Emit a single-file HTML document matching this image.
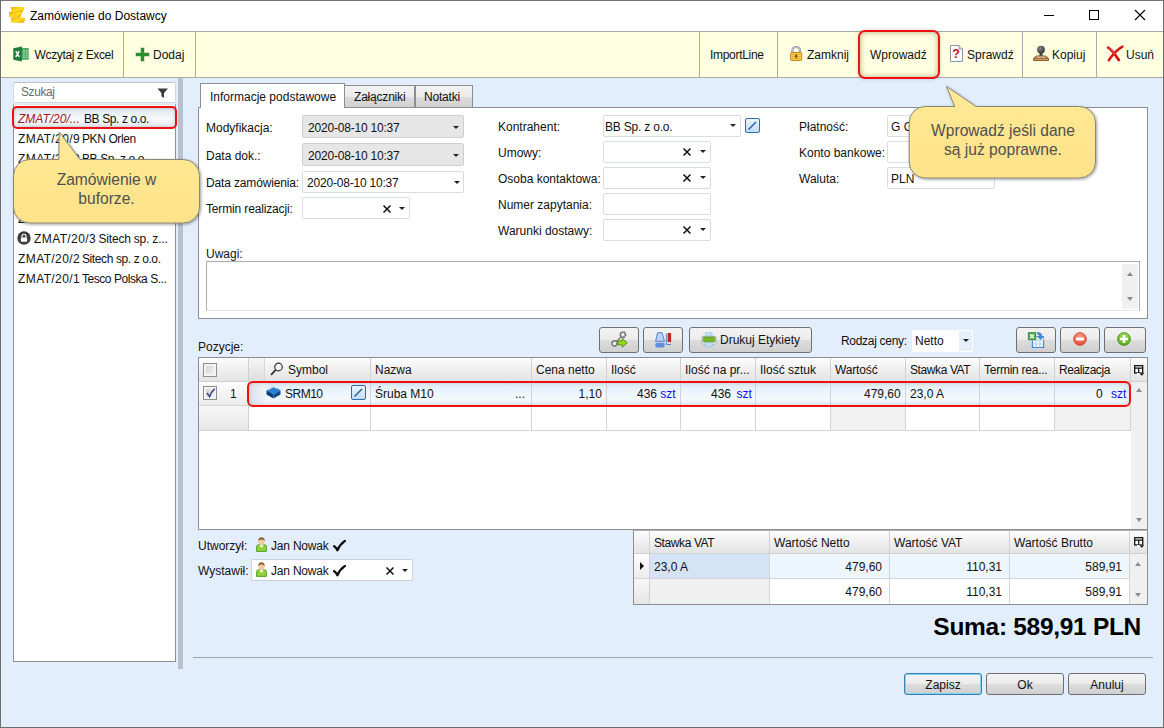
<!DOCTYPE html>
<html lang="pl">
<head>
<meta charset="utf-8">
<title>Zamówienie do Dostawcy</title>
<style>
*{box-sizing:border-box;margin:0;padding:0}
html,body{width:1164px;height:728px;overflow:hidden;background:#e3eefd}
body{position:relative;font-family:"Liberation Sans",sans-serif;font-size:12px;color:#111;letter-spacing:0}
.a{position:absolute}
.t{position:absolute;white-space:nowrap;line-height:16px;height:16px}
#win{left:0;top:0;width:1164px;height:728px;border:1px solid #6e6e6e;border-top-color:#777;pointer-events:none;z-index:50}
#title{left:1px;top:1px;width:1162px;height:30px;background:#fff}
#tb{left:1px;top:31px;width:1162px;height:47px;background:#ffffe1;border-top:1px solid #a9a9a9;border-bottom:1px solid #a9a9a9}
.sep{position:absolute;top:32px;width:1px;height:45px;background:#a9a9a9}
.inp{position:absolute;background:#fff;border:1px solid #d9dce1;border-radius:2px}
.inp.g{background:#e6e6e6;border-color:#cfcfcf}
.arr{position:absolute;width:0;height:0;border-left:3px solid transparent;border-right:3px solid transparent;border-top:3px solid #222}
.x{position:absolute;width:10px;height:10px}
.btn{position:absolute;border:1px solid #707070;border-radius:3px;background:linear-gradient(#f3f3f3,#ebebeb 50%,#dddddd 50%,#cfcfcf)}
.hd{position:absolute;background:linear-gradient(#fdfdfd,#efefef 52%,#e3e3e3);border-right:1px solid #d0d0d0;border-bottom:1px solid #d0d0d0}
.cell{position:absolute;border-right:1px solid #d4d4d4;border-bottom:1px solid #d4d4d4;background:#fff}
.blue{color:#0a0af0}
.call{position:absolute;font-family:"Liberation Sans",sans-serif;font-size:15.6px;letter-spacing:0;color:#505050;text-align:center;line-height:19px}
</style>
</head>
<body>
<div class="a" id="title"></div>
<!-- title icon: stack of gold coins -->
<svg class="a" style="left:8px;top:6px" width="18" height="18" viewBox="0 0 18 18">
 <defs><linearGradient id="gc" x1="0" y1="0" x2="1" y2="1"><stop offset="0" stop-color="#e8a90a"/><stop offset=".5" stop-color="#ffe11a"/><stop offset="1" stop-color="#e69c05"/></linearGradient></defs>
 <path d="M3.200 1h13.600l-2.200 5.200H3.200z" fill="url(#gc)"/>
 <path d="M1 6h13.400l-2.200 5.500H1z" fill="url(#gc)"/>
 <path d="M3.200 11.400h13.600v3l-1.600 2.400H3.200z" fill="url(#gc)"/>
</svg>
<div class="t" style="left:30px;top:8px;color:#000">Zamówienie do Dostawcy</div>
<!-- window controls -->
<div class="a" style="left:1044px;top:15px;width:10px;height:1px;background:#000"></div>
<div class="a" style="left:1089px;top:10px;width:10px;height:10px;border:1px solid #000"></div>
<svg class="a" style="left:1134px;top:9px" width="12" height="12" viewBox="0 0 12 12"><path d="M1 1l10 10M11 1L1 11" stroke="#000" stroke-width="1.1" fill="none"/></svg>

<div class="a" id="tb"></div>
<div class="sep" style="left:123px"></div>
<div class="sep" style="left:195px"></div>
<div class="sep" style="left:699px"></div>
<div class="sep" style="left:777px"></div>
<div class="sep" style="left:1022px"></div>
<div class="sep" style="left:1096px"></div>
<!-- excel icon -->
<svg class="a" style="left:13px;top:46px" width="16" height="16" viewBox="0 0 16 16">
 <rect x="8" y="2.100" width="7.700" height="11.600" fill="#41a557"/>
 <path d="M9.700 4h2.200v1.400H9.700zM12.600 4h2.200v1.400h-2.200zM9.700 6.200h2.200v1.400H9.700zM12.600 6.200h2.200v1.400h-2.200zM9.700 8.400h2.200v1.400H9.700zM12.600 8.400h2.200v1.400h-2.200zM9.700 10.600h2.200V12H9.700zM12.600 10.600h2.200V12h-2.200z" fill="#9fd6a9"/>
 <path d="M0.300 2.200L8.900 0.500v15L0.300 13.800z" fill="#1f7c3d"/>
 <path d="M2.800 5.200l3.400 5.600M6.200 5.200l-3.400 5.600" stroke="#fff" stroke-width="1.500"/>
</svg>
<div class="t" style="left:34.500px;top:47px;letter-spacing:-0.35px">Wczytaj z Excel</div>
<!-- plus icon -->
<svg class="a" style="left:134.700px;top:46.800px" width="15" height="15" viewBox="0 0 15 15"><path d="M5.500 0.500h4v5h5v4h-5v5h-4v-5h-5v-4h5z" fill="#2e8b2e" stroke="#f4f8e4" stroke-width=".6"/></svg>
<div class="t" style="left:153px;top:47px">Dodaj</div>
<div class="t" style="left:710px;top:47px;letter-spacing:-0.3px">ImportLine</div>
<!-- lock icon -->
<svg class="a" style="left:789px;top:45px" width="14" height="17" viewBox="0 0 14 17">
 <path d="M3.400 8V5.200a3.800 3.200 0 0 1 7.600 0V8" fill="none" stroke="#8e94a6" stroke-width="2.200"/>
 <path d="M3.400 8V5.200a3.800 3.200 0 0 1 7.600 0V8" fill="none" stroke="#c9cedb" stroke-width=".8"/>
 <rect x="1.700" y="7.500" width="11" height="8" rx=".8" fill="#f7cd4e" stroke="#c8821a" stroke-width="1"/>
 <path d="M3 9.500h8.400M3 11.500h8.400M3 13.500h8.400" stroke="#e0a22c" stroke-width=".8"/>
 <rect x="6.400" y="9.600" width="1.600" height="3.200" fill="#5a3c0c"/>
</svg>
<div class="t" style="left:807px;top:47px">Zamknij</div>
<!-- red highlight around Wprowadź -->
<div class="a" style="left:858px;top:30px;width:82px;height:49px;border:2px solid #f01010;border-radius:7px;background:#ffffe1;box-shadow:inset 0 0 5px 1px rgba(130,130,80,.5),0 0 4px rgba(90,90,90,.25)"></div>
<div class="t" style="left:870px;top:47px">Wprowadź</div>
<!-- question doc icon -->
<svg class="a" style="left:950px;top:45px" width="13" height="17" viewBox="0 0 13 17">
 <path d="M0.5 0.5h8.5l3.5 3.5v12.5H0.5z" fill="#fff" stroke="#8a94a8"/>
 <path d="M9 0.5v3.5h3.5" fill="#e6e9f0" stroke="#8a94a8"/>
 <text x="6" y="13" font-family="Liberation Sans,sans-serif" font-weight="bold" font-size="12.500" fill="#c80c0c" text-anchor="middle">?</text>
</svg>
<div class="t" style="left:967px;top:47px">Sprawdź</div>
<!-- stamp icon -->
<svg class="a" style="left:1033px;top:45px" width="17" height="17" viewBox="0 0 17 17">
 <defs><radialGradient id="sb" cx=".4" cy=".35" r=".7"><stop offset="0" stop-color="#8a8a8a"/><stop offset="1" stop-color="#2e2e2e"/></radialGradient></defs>
 <path d="M6.700 7.500h2.600l.5 4H6.200z" fill="#444"/>
 <circle cx="8" cy="4.600" r="3.900" fill="url(#sb)"/>
 <path d="M3.200 11h9.600l2.700 2.300v2.200H0.500v-2.200z" fill="#c99c6e" stroke="#86572a" stroke-width=".9" stroke-linejoin="round"/>
 <path d="M1 13.300h14" stroke="#86572a" stroke-width=".8"/>
 <path d="M3.600 12.100h8.800" stroke="#e6c9a6" stroke-width=".8"/>
</svg>
<div class="t" style="left:1052px;top:47px">Kopiuj</div>
<!-- red X -->
<svg class="a" style="left:1106px;top:45px" width="18" height="17" viewBox="0 0 18 17">
 <path d="M2.200 2.600C5.500 4.500 9.500 10 12.800 15" stroke="#d21212" stroke-width="2.800" fill="none" stroke-linecap="round"/>
 <path d="M16.400 1.600C11.500 4.500 6 10.500 2.800 15.200" stroke="#d61616" stroke-width="2.400" fill="none" stroke-linecap="round"/>
 <path d="M2.600 2.400C5 4 7.500 7 9 9.500" stroke="#ee7070" stroke-width=".9" fill="none"/>
</svg>
<div class="t" style="left:1126px;top:47px">Usuń</div>

<!-- LEFT PANEL -->
<div class="inp" style="left:13px;top:82px;width:163px;height:21px;border-color:#d3d7dd;border-top-color:#bfc3c9"></div>
<div class="t" style="left:21px;top:84px;color:#6a6a6a;letter-spacing:-0.4px">Szukaj</div>
<svg class="a" style="left:157.300px;top:87.600px" width="11.400" height="10.500" viewBox="0 0 13 12"><path d="M0.5 0.5h12L8 5.8V11.5L5 9.5V5.8z" fill="#3a3a3a"/></svg>
<div class="a" style="left:13px;top:104px;width:163px;height:558px;background:#fff;border:1px solid #8f8f8f;border-top-color:#e2e5e9"></div>
<div class="a" style="left:12px;top:106px;width:165px;height:23px;border:2px solid #ee1111;border-radius:5px;background:linear-gradient(#dde6ec,#f6f9fb 55%,#e4ebf0);box-shadow:inset 0 0 3px rgba(100,120,140,.45)"></div>
<div class="t" style="left:18px;top:111px;color:#a0202a;font-style:italic;letter-spacing:0px">ZMAT/20/...</div>
<div class="t" style="left:84px;top:111px;letter-spacing:-0.4px">BB Sp. z o.o.</div>
<div class="t" style="left:18px;top:131px;letter-spacing:0.4px">ZMAT/20/9</div><div class="t" style="left:82px;top:131px;letter-spacing:-0.4px">PKN Orlen</div>
<div class="t" style="left:18px;top:151px;letter-spacing:0.4px">ZMAT/20/8</div><div class="t" style="left:82px;top:151px;letter-spacing:-0.4px">BB Sp. z o.o.</div>
<div class="t" style="left:18px;top:171px;letter-spacing:0.4px">ZMAT/20/7</div><div class="t" style="left:82px;top:171px;letter-spacing:-0.4px">PKN Orlen</div>
<div class="t" style="left:18px;top:191px;letter-spacing:0.4px">ZMAT/20/6</div><div class="t" style="left:82px;top:191px;letter-spacing:-0.4px">BB Sp. z o.o.</div>
<div class="t" style="left:18px;top:211px;letter-spacing:0.4px">ZMAT/20/5</div><div class="t" style="left:82px;top:211px;letter-spacing:-0.4px">PKN Orlen</div>
<svg class="a" style="left:17px;top:231px" width="14" height="14" viewBox="0 0 13 13"><circle cx="6.5" cy="6.5" r="6.2" fill="#3c3c3c"/><rect x="3.6" y="6" width="5.8" height="4" rx=".6" fill="#fff"/><path d="M4.7 6V4.8a1.8 1.8 0 0 1 3.6 0V6" stroke="#fff" stroke-width="1.1" fill="none"/></svg>
<div class="t" style="left:34px;top:231px;letter-spacing:0.4px">ZMAT/20/3</div><div class="t" style="left:98.5px;top:231px;letter-spacing:-0.2px">Sitech sp. z...</div>
<div class="t" style="left:18px;top:251px;letter-spacing:0.4px">ZMAT/20/2</div><div class="t" style="left:82px;top:251px;letter-spacing:-0.4px">Sitech sp. z o.o.</div>
<div class="t" style="left:18px;top:271px;letter-spacing:0.4px">ZMAT/20/1</div><div class="t" style="left:82px;top:271px;letter-spacing:-0.45px">Tesco Polska S...</div>
<!-- splitter -->
<div class="a" style="left:178px;top:78px;width:5px;height:591px;background:#b9c1cd"></div>

<!-- TABS -->
<div class="a" style="left:198px;top:107px;width:950px;height:212px;background:#fff;border:1px solid #8c8e94"></div>
<div class="a" style="left:344px;top:85px;width:71px;height:23px;border:1px solid #8c8e94;background:linear-gradient(#f3f3f3,#ebebeb 50%,#dddddd 50%,#d0d0d0)"></div>
<div class="a" style="left:415px;top:85px;width:58px;height:23px;border:1px solid #8c8e94;background:linear-gradient(#f3f3f3,#ebebeb 50%,#dddddd 50%,#d0d0d0)"></div>
<div class="a" style="left:200px;top:83px;width:145px;height:25px;border:1px solid #8c8e94;border-bottom:none;background:#fff"></div>
<div class="t" style="left:210px;top:89px">Informacje podstawowe</div>
<div class="t" style="left:354px;top:89px;letter-spacing:-0.2px">Załączniki</div>
<div class="t" style="left:424px;top:89px;letter-spacing:-0.2px">Notatki</div>

<!-- column 1 -->
<div class="t" style="left:206px;top:120px">Modyfikacja:</div>
<div class="inp g" style="left:302px;top:115px;width:162px;height:23px"></div>
<div class="t" style="left:308px;top:120px;letter-spacing:-0.2px">2020-08-10 10:37</div><div class="arr" style="left:453px;top:126px"></div>
<div class="t" style="left:206px;top:148px">Data dok.:</div>
<div class="inp g" style="left:302px;top:143px;width:162px;height:23px"></div>
<div class="t" style="left:308px;top:148px;letter-spacing:-0.2px">2020-08-10 10:37</div><div class="arr" style="left:453px;top:154px"></div>
<div class="t" style="left:206px;top:175px;letter-spacing:-0.15px">Data zamówienia:</div>
<div class="inp" style="left:302px;top:171px;width:162px;height:22px"></div>
<div class="t" style="left:307px;top:175px;letter-spacing:-0.2px">2020-08-10 10:37</div><div class="arr" style="left:454px;top:181px"></div>
<div class="t" style="left:206px;top:201px;letter-spacing:-0.15px">Termin realizacji:</div>
<div class="inp" style="left:302px;top:197px;width:108px;height:22px"></div><svg class="x" style="left:382px;top:204px" viewBox="0 0 10 10"><path d="M1.5 1.5l7 7M8.5 1.5l-7 7" stroke="#111" stroke-width="1.500" fill="none"/></svg><div class="arr" style="left:399px;top:207px"></div>

<!-- column 2 -->
<div class="t" style="left:498px;top:119px">Kontrahent:</div>
<div class="inp" style="left:603px;top:115px;width:138px;height:22px"></div>
<div class="t" style="left:605px;top:119px;letter-spacing:-0.2px">BB Sp. z o.o.</div><div class="arr" style="left:730px;top:124px"></div>
<div class="a" style="left:745px;top:118px;width:15px;height:15px;border:1px solid #2a6fb5;border-radius:2px;background:linear-gradient(#eaf4ff,#c4ddf7)"></div>
<svg class="a" style="left:747px;top:120px" width="11" height="11" viewBox="0 0 11 11"><path d="M1.500 9.500L9 2" stroke="#1f5fa8" stroke-width="1.500" fill="none"/></svg>
<div class="t" style="left:498px;top:145px">Umowy:</div>
<div class="inp" style="left:603px;top:141px;width:108px;height:22px"></div><svg class="x" style="left:682px;top:147px" viewBox="0 0 10 10"><path d="M1.5 1.5l7 7M8.5 1.5l-7 7" stroke="#111" stroke-width="1.500" fill="none"/></svg><div class="arr" style="left:700px;top:150px"></div>
<div class="t" style="left:498px;top:171px">Osoba kontaktowa:</div>
<div class="inp" style="left:603px;top:167px;width:108px;height:22px"></div><svg class="x" style="left:682px;top:173px" viewBox="0 0 10 10"><path d="M1.5 1.5l7 7M8.5 1.5l-7 7" stroke="#111" stroke-width="1.500" fill="none"/></svg><div class="arr" style="left:700px;top:176px"></div>
<div class="t" style="left:498px;top:197px">Numer zapytania:</div>
<div class="inp" style="left:603px;top:193px;width:108px;height:22px"></div>
<div class="t" style="left:498px;top:223px">Warunki dostawy:</div>
<div class="inp" style="left:603px;top:219px;width:108px;height:22px"></div><svg class="x" style="left:682px;top:225px" viewBox="0 0 10 10"><path d="M1.5 1.5l7 7M8.5 1.5l-7 7" stroke="#111" stroke-width="1.500" fill="none"/></svg><div class="arr" style="left:700px;top:228px"></div>

<!-- column 3 -->
<div class="t" style="left:799px;top:119px">Płatność:</div>
<div class="inp" style="left:887px;top:115px;width:108px;height:22px"></div>
<div class="t" style="left:891px;top:119px">G G</div>
<div class="t" style="left:799px;top:145px">Konto bankowe:</div>
<div class="inp" style="left:887px;top:141px;width:108px;height:22px"></div>
<div class="t" style="left:799px;top:171px">Waluta:</div>
<div class="inp" style="left:887px;top:167px;width:108px;height:22px"></div>
<div class="t" style="left:891px;top:171px">PLN</div>

<div class="t" style="left:206px;top:246px">Uwagi:</div>
<div class="a" style="left:206px;top:261px;width:934px;height:50px;background:#fff;border:1px solid #abadb3;border-bottom-color:#e3e5e8"></div>
<div class="a" style="left:1122px;top:264px;width:16px;height:45px;background:#f0f0f0"></div>
<div class="arr" style="left:1126.5px;top:272px;border-left-width:3.500px;border-right-width:3.500px;border-top:none;border-bottom:4px solid #8a8a8a"></div>
<div class="arr" style="left:1126.5px;top:297px;border-left-width:3.500px;border-right-width:3.500px;border-top:4px solid #8a8a8a"></div>

<!-- POZYCJE -->
<div class="t" style="left:198px;top:339px">Pozycje:</div>
<div class="btn" style="left:599px;top:327px;width:40px;height:26px"></div>
<div class="btn" style="left:643px;top:327px;width:40px;height:26px"></div>
<div class="btn" style="left:689px;top:327px;width:123px;height:26px"></div>
<div class="t" style="left:720px;top:332px">Drukuj Etykiety</div>
<div class="t" style="left:841px;top:333px;letter-spacing:-0.3px">Rodzaj ceny:</div>
<div class="a" style="left:912px;top:330px;width:61px;height:22px;background:#fff"></div>
<div class="a" style="left:959px;top:331px;width:13px;height:20px;background:#e6effb"></div>
<div class="t" style="left:915px;top:333px">Netto</div><div class="arr" style="left:963px;top:339px"></div>
<div class="btn" style="left:1016px;top:327px;width:40px;height:26px"></div>
<div class="btn" style="left:1060px;top:327px;width:40px;height:26px"></div>
<div class="btn" style="left:1104px;top:327px;width:42px;height:26px"></div>
<!-- button icons -->
<svg class="a" style="left:610px;top:330px" width="20" height="20" viewBox="0 0 20 20">
 <path d="M5 13.500L12.500 5" stroke="#7a7a7a" stroke-width="1.200"/>
 <circle cx="12.900" cy="4.700" r="2.600" fill="#eee" stroke="#666" stroke-width="1.700" stroke-dasharray="1.700 .4"/>
 <circle cx="4.600" cy="13.400" r="2.600" fill="#eee" stroke="#666" stroke-width="1.700" stroke-dasharray="1.700 .4"/>
 <path d="M7.800 10.800h4.400V8.300l5 4.500-5 4.500v-2.500H7.800z" fill="#96d820" stroke="#4c8f12" stroke-width=".9" stroke-linejoin="round"/>
</svg>
<svg class="a" style="left:654px;top:331px" width="19" height="18" viewBox="0 0 19 18">
 <path d="M3.600 1.700h4.400l2.500 8.600H1.600z" fill="#bcd3f3" stroke="#4f82d2" stroke-width="1"/>
 <rect x="1.400" y="11.700" width="9.200" height="4.800" rx="1.600" fill="#5e8fdc"/>
 <path d="M12.300 2.500v11h4.800" fill="none" stroke="#5a86cc" stroke-width="1"/>
 <rect x="13.600" y="2" width="3.500" height="9" fill="#c1271c"/>
</svg>
<svg class="a" style="left:701px;top:332px" width="16" height="16" viewBox="0 0 16 16">
 <rect x="4.600" y="0.800" width="6.400" height="4.500" fill="#bfe3f6" stroke="#8cc4e4" stroke-width=".7"/>
 <rect x="0.800" y="4.300" width="14.400" height="8" rx="1.500" fill="#e4e6e8" stroke="#a5a9ad" stroke-width=".8"/>
 <rect x="2.200" y="5" width="11.600" height="5" rx=".8" fill="#79b52b" stroke="#5c9a18" stroke-width=".7"/>
 <rect x="4.600" y="10.800" width="6.400" height="4" fill="#bfe3f6" stroke="#8cc4e4" stroke-width=".7"/>
</svg>
<svg class="a" style="left:1027px;top:331px" width="18" height="18" viewBox="0 0 18 18">
 <rect x="5.400" y="6" width="11.200" height="10.400" fill="#fff" stroke="#2f80d2" stroke-width="1.100"/>
 <path d="M5.400 9.600h11.200M5.400 13h11.200M9.200 9.600v6.800M12.900 9.600v6.800" stroke="#a9cdf0" stroke-width="1"/>
 <rect x="5.400" y="6" width="11.200" height="3.200" fill="#d8eafb" opacity=".9"/>
 <path d="M10.500 1.500c3.200 0 4.300 1.600 4.300 4h1.700l-2.900 3-2.900-3h1.700c0-1.500-.4-2.200-1.900-2.200z" fill="#3b8be0" stroke="#1f64b8" stroke-width=".5"/>
 <rect x="1.200" y="1.600" width="7.600" height="7.200" fill="#49a64c" stroke="#2f8a3a" stroke-width=".7"/>
 <path d="M3 3.200l4 4M7 3.200l-4 4" stroke="#fff" stroke-width="1.300"/>
</svg>
<svg class="a" style="left:1073px;top:331.700px" width="14" height="14" viewBox="0 0 16 16"><defs><radialGradient id="rg" cx=".5" cy=".25" r=".8"><stop offset="0" stop-color="#ff9c86"/><stop offset="1" stop-color="#e2402c"/></radialGradient></defs><circle cx="8" cy="8" r="7.300" fill="url(#rg)" stroke="#cf3a26" stroke-width=".8"/><rect x="3.300" y="6.400" width="9.400" height="3.200" rx="1" fill="#fff"/></svg>
<svg class="a" style="left:1117px;top:331.700px" width="14" height="14" viewBox="0 0 16 16"><defs><radialGradient id="gg" cx=".5" cy=".25" r=".8"><stop offset="0" stop-color="#a6e060"/><stop offset="1" stop-color="#4da512"/></radialGradient></defs><circle cx="8" cy="8" r="7.300" fill="url(#gg)" stroke="#3f8f10" stroke-width=".9"/><path d="M6.500 3.300h3v3.200h3.200v3H9.500v3.200h-3V9.500H3.300v-3h3.200z" fill="#fff"/></svg>

<!-- grid -->
<div class="a" style="left:198px;top:357px;width:950px;height:173px;background:#fff;border:1px solid #8c8e94"></div>
<div class="hd" style="left:199px;top:358px;width:50px;height:24px"></div>
<div class="a" style="left:199px;top:382px;width:50px;height:24px;background:linear-gradient(#fdfdfd,#ececec);border-right:1px solid #d0d0d0;border-bottom:1px solid #d4d4d4"></div>
<div class="a" style="left:199px;top:406px;width:50px;height:25px;background:linear-gradient(#f7f7f7,#e6e6e6);border-right:1px solid #d0d0d0;border-bottom:1px solid #d4d4d4"></div>
<div class="a" style="left:203px;top:363px;width:14px;height:14px;border:1px solid #8e8f8f;background:linear-gradient(135deg,#cfcfcf,#f6f6f6);box-shadow:inset 0 0 0 2px #f4f4f4"></div>
<div class="a" style="left:203px;top:386px;width:14px;height:14px;border:1px solid #8e8f8f;background:linear-gradient(135deg,#cfcfcf,#f6f6f6);box-shadow:inset 0 0 0 2px #f4f4f4"></div>
<svg class="a" style="left:205.500px;top:388px" width="10" height="10" viewBox="0 0 10 10"><path d="M1 5l2.600 3.600C4.500 5.500 6 3 8.800 0.800" stroke="#3a468c" stroke-width="1.600" fill="none"/></svg>
<div class="t" style="left:230px;top:386px">1</div>
<div class="hd" style="left:249px;top:358px;width:122px;height:24px"></div>
<div class="t" style="left:288px;top:362px">Symbol</div>
<div class="cell" style="left:249px;top:382px;width:122px;height:24px;background:linear-gradient(#dfecf9,#f4f9fe 70%,#eaf3fc)"></div>
<div class="cell" style="left:249px;top:406px;width:122px;height:25px;background:#fff"></div>
<div class="hd" style="left:371px;top:358px;width:161px;height:24px"></div>
<div class="t" style="left:375px;top:362px">Nazwa</div>
<div class="cell" style="left:371px;top:382px;width:161px;height:24px;background:linear-gradient(#dfecf9,#f4f9fe 70%,#eaf3fc)"></div>
<div class="cell" style="left:371px;top:406px;width:161px;height:25px;background:#fff"></div>
<div class="hd" style="left:532px;top:358px;width:75px;height:24px"></div>
<div class="t" style="left:536px;top:362px">Cena netto</div>
<div class="cell" style="left:532px;top:382px;width:75px;height:24px;background:linear-gradient(#dfecf9,#f4f9fe 70%,#eaf3fc)"></div>
<div class="cell" style="left:532px;top:406px;width:75px;height:25px;background:#fff"></div>
<div class="hd" style="left:607px;top:358px;width:74px;height:24px"></div>
<div class="t" style="left:611px;top:362px">Ilość</div>
<div class="cell" style="left:607px;top:382px;width:74px;height:24px;background:linear-gradient(#dfecf9,#f4f9fe 70%,#eaf3fc)"></div>
<div class="cell" style="left:607px;top:406px;width:74px;height:25px;background:#fff"></div>
<div class="hd" style="left:681px;top:358px;width:75px;height:24px"></div>
<div class="t" style="left:685px;top:362px">Ilość na pr...</div>
<div class="cell" style="left:681px;top:382px;width:75px;height:24px;background:linear-gradient(#dfecf9,#f4f9fe 70%,#eaf3fc)"></div>
<div class="cell" style="left:681px;top:406px;width:75px;height:25px;background:#fff"></div>
<div class="hd" style="left:756px;top:358px;width:75px;height:24px"></div>
<div class="t" style="left:760px;top:362px">Ilość sztuk</div>
<div class="cell" style="left:756px;top:382px;width:75px;height:24px;background:linear-gradient(#dfecf9,#f4f9fe 70%,#eaf3fc)"></div>
<div class="cell" style="left:756px;top:406px;width:75px;height:25px;background:#fff"></div>
<div class="hd" style="left:831px;top:358px;width:75px;height:24px"></div>
<div class="t" style="left:835px;top:362px;letter-spacing:-0.15px">Wartość</div>
<div class="cell" style="left:831px;top:382px;width:75px;height:24px;background:linear-gradient(#dfecf9,#f4f9fe 70%,#eaf3fc)"></div>
<div class="cell" style="left:831px;top:406px;width:75px;height:25px;background:#f1f1f1"></div>
<div class="hd" style="left:906px;top:358px;width:74px;height:24px"></div>
<div class="t" style="left:910px;top:362px;letter-spacing:-0.4px">Stawka VAT</div>
<div class="cell" style="left:906px;top:382px;width:74px;height:24px;background:linear-gradient(#dfecf9,#f4f9fe 70%,#eaf3fc)"></div>
<div class="cell" style="left:906px;top:406px;width:74px;height:25px;background:#fff"></div>
<div class="hd" style="left:980px;top:358px;width:75px;height:24px"></div>
<div class="t" style="left:984px;top:362px;letter-spacing:-0.25px">Termin rea...</div>
<div class="cell" style="left:980px;top:382px;width:75px;height:24px;background:linear-gradient(#dfecf9,#f4f9fe 70%,#eaf3fc)"></div>
<div class="cell" style="left:980px;top:406px;width:75px;height:25px;background:#fff"></div>
<div class="hd" style="left:1055px;top:358px;width:76px;height:24px"></div>
<div class="t" style="left:1059px;top:362px;letter-spacing:-0.45px">Realizacja</div>
<div class="cell" style="left:1055px;top:382px;width:76px;height:24px;background:linear-gradient(#dfecf9,#f4f9fe 70%,#eaf3fc)"></div>
<div class="cell" style="left:1055px;top:406px;width:76px;height:25px;background:#f1f1f1"></div>

<div class="hd" style="left:1131px;top:358px;width:16px;height:24px;border-right:none"></div>
<div class="a" style="left:1131px;top:382px;width:16px;height:147px;background:#f0f0f0"></div>
<div class="arr" style="left:1135.5px;top:388px;border-left-width:3.500px;border-right-width:3.500px;border-top:none;border-bottom:4px solid #8a8a8a"></div>
<div class="arr" style="left:1135.5px;top:518px;border-left-width:3.500px;border-right-width:3.500px;border-top:4px solid #8a8a8a"></div>
<svg class="a" style="left:1134px;top:365px" width="10" height="11" viewBox="0 0 10 11"><rect x="0.700" y="0.700" width="8" height="7.300" fill="#fff" stroke="#111" stroke-width="1.300"/><path d="M0.700 3.200h8M4.700 3.200v4.800" stroke="#111" stroke-width="1.200"/><rect x="3" y="8" width="7" height="1.500" fill="#fff"/><path d="M5.200 8.200h5.200l-2.600 2.600z" fill="#111"/></svg>
<svg class="a" style="left:270px;top:362px" width="14" height="14" viewBox="0 0 14 14"><circle cx="8.500" cy="5" r="3.800" fill="none" stroke="#333" stroke-width="1.200"/><path d="M5.800 7.800L1 12.800" stroke="#333" stroke-width="1.800"/></svg>
<div class="a" style="left:249px;top:358px;width:16px;height:23px;background:linear-gradient(#f6f6f6,#e9e9e9 55%,#dedede);border-right:1px solid #d8d8d8"></div>
<div class="a" style="left:249px;top:383px;width:16px;height:22px;background:linear-gradient(90deg,#d9e0e7,#eef3f8)"></div>
<!-- row content -->
<svg class="a" style="left:266px;top:386px" width="15" height="13" viewBox="0 0 15 13"><path d="M7.500 0.400L14.500 4.200 7.500 8.300 0.500 4.200z" fill="#2b7fd2"/><path d="M0.500 4.200L7.500 8.300v4.300L0.500 8.600z" fill="#0d3d7a"/><path d="M14.500 4.200L7.500 8.300v4.300l7-4z" fill="#114a8e"/><path d="M1.500 4.100L7.500 0.900l3 1.600" stroke="#d8ecff" stroke-width=".9" fill="none"/></svg>
<div class="t" style="left:285px;top:386px;letter-spacing:-0.5px">SRM10</div>
<div class="a" style="left:351px;top:385px;width:15px;height:15px;border:1px solid #2a6fb5;border-radius:2px;background:linear-gradient(#eaf4ff,#c4ddf7)"></div>
<svg class="a" style="left:353px;top:387px" width="11" height="11" viewBox="0 0 11 11"><path d="M1.500 9.500L9 2" stroke="#1f5fa8" stroke-width="1.500" fill="none"/></svg>
<div class="t" style="left:375px;top:386px">Śruba M10</div>
<div class="t" style="left:515px;top:386px">...</div>
<div class="t" style="left:578.500px;top:386px">1,10</div>
<div class="t" style="left:637px;top:386px">436 <span class="blue">szt</span></div>
<div class="t" style="left:711px;top:386px">436<span class="blue" style="margin-left:5.500px">szt</span></div>
<div class="t" style="left:864px;top:386px">479,60</div>
<div class="t" style="left:910px;top:386px">23,0 A</div>
<div class="t" style="left:1096px;top:386px">0<span class="blue" style="margin-left:8.300px">szt</span></div>
<!-- red highlight on row -->
<div class="a" style="left:247px;top:381px;width:884px;height:26px;border:2px solid #f01010;border-radius:6px;box-shadow:inset 0 0 4px rgba(110,120,130,.28)"></div>

<!-- BOTTOM -->
<div class="t" style="left:198px;top:538px">Utworzył:</div>
<div class="t" style="left:271px;top:538px;letter-spacing:-0.2px">Jan Nowak</div>
<div class="t" style="left:198px;top:563px">Wystawił:</div>
<div class="inp" style="left:251px;top:559px;width:162px;height:22px;border-color:#cdd1d7"></div>
<div class="t" style="left:271px;top:563px;letter-spacing:-0.2px">Jan Nowak</div><svg class="x" style="left:385px;top:566px" viewBox="0 0 10 10"><path d="M1.5 1.5l7 7M8.5 1.5l-7 7" stroke="#111" stroke-width="1.500" fill="none"/></svg><div class="arr" style="left:402px;top:569px"></div>
<svg class="a" style="left:255.500px;top:536.5px" width="11" height="15" viewBox="0 0 11 15"><path d="M0.600 14.400V9.600c0-1.200 1-1.800 2.200-1.800h5.400c1.200 0 2.200.6 2.200 1.800v4.800z" fill="#8fd33c" stroke="#4a9a1c" stroke-width=".9"/><path d="M3.300 8.200l2.200 2.600 2.200-2.600z" fill="#fff"/><ellipse cx="5.500" cy="4.600" rx="3" ry="3.700" fill="#f0c9a0"/><path d="M2.300 4.400C2 1.500 3.600 0.300 5.500 0.300S9 1.500 8.700 4.400C8 3 7 2.600 5.500 2.600S3 3 2.300 4.400z" fill="#8b5a2b"/></svg>
<svg class="a" style="left:332.500px;top:539.5px" width="13" height="12" viewBox="0 0 13 12"><path d="M1.200 6.200C2.500 7 3.500 8.300 4.400 10.200 6 6.500 8.500 3.300 12 0.900" stroke="#0c0c0c" stroke-width="2.300" fill="none" stroke-linecap="round" stroke-linejoin="round"/></svg>
<svg class="a" style="left:255.500px;top:561.5px" width="11" height="15" viewBox="0 0 11 15"><path d="M0.600 14.400V9.600c0-1.200 1-1.800 2.200-1.800h5.400c1.200 0 2.200.6 2.200 1.800v4.800z" fill="#8fd33c" stroke="#4a9a1c" stroke-width=".9"/><path d="M3.300 8.200l2.200 2.600 2.200-2.600z" fill="#fff"/><ellipse cx="5.500" cy="4.600" rx="3" ry="3.700" fill="#f0c9a0"/><path d="M2.300 4.400C2 1.500 3.600 0.300 5.500 0.300S9 1.500 8.700 4.400C8 3 7 2.600 5.500 2.600S3 3 2.300 4.400z" fill="#8b5a2b"/></svg>
<svg class="a" style="left:332.500px;top:564.5px" width="13" height="12" viewBox="0 0 13 12"><path d="M1.200 6.200C2.500 7 3.500 8.300 4.400 10.200 6 6.500 8.500 3.300 12 0.900" stroke="#0c0c0c" stroke-width="2.300" fill="none" stroke-linecap="round" stroke-linejoin="round"/></svg>

<!-- summary grid -->
<div class="a" style="left:633px;top:530px;width:515px;height:75px;background:#fff;border:1px solid #8c8e94;border-top-color:#b0b0b0"></div>
<div class="hd" style="left:634px;top:531px;width:16px;height:23px"></div>
<div class="a" style="left:634px;top:554px;width:16px;height:25px;background:linear-gradient(#fdfdfd,#ececec);border-right:1px solid #d0d0d0;border-bottom:1px solid #d4d4d4"></div>
<div class="a" style="left:634px;top:579px;width:16px;height:25px;background:linear-gradient(#f7f7f7,#e6e6e6);border-right:1px solid #d0d0d0"></div>
<div class="a" style="left:640px;top:562px;width:0;height:0;border-top:4px solid transparent;border-bottom:4px solid transparent;border-left:4px solid #111"></div>
<div class="hd" style="left:650px;top:531px;width:120px;height:23px"></div>
<div class="t" style="left:654px;top:535px;letter-spacing:-0.4px">Stawka VAT</div>
<div class="cell" style="left:650px;top:554px;width:120px;height:25px;background:#d4e3f6"></div>
<div class="cell" style="left:650px;top:579px;width:120px;height:25px;border-bottom:none;background:#f0f0f0"></div>
<div class="t" style="left:654px;top:559px">23,0 A</div>
<div class="hd" style="left:770px;top:531px;width:120px;height:23px"></div>
<div class="t" style="left:774px;top:535px">Wartość Netto</div>
<div class="cell" style="left:770px;top:554px;width:120px;height:25px;background:#eef6fd"></div>
<div class="cell" style="left:770px;top:579px;width:120px;height:25px;border-bottom:none"></div>
<div class="t" style="left:770px;top:559px;width:112px;text-align:right">479,60</div>
<div class="t" style="left:770px;top:584px;width:112px;text-align:right">479,60</div>
<div class="hd" style="left:890px;top:531px;width:120px;height:23px"></div>
<div class="t" style="left:894px;top:535px">Wartość VAT</div>
<div class="cell" style="left:890px;top:554px;width:120px;height:25px;background:#eef6fd"></div>
<div class="cell" style="left:890px;top:579px;width:120px;height:25px;border-bottom:none"></div>
<div class="t" style="left:890px;top:559px;width:112px;text-align:right">110,31</div>
<div class="t" style="left:890px;top:584px;width:112px;text-align:right">110,31</div>
<div class="hd" style="left:1010px;top:531px;width:120px;height:23px"></div>
<div class="t" style="left:1014px;top:535px">Wartość Brutto</div>
<div class="cell" style="left:1010px;top:554px;width:120px;height:25px;background:#eef6fd"></div>
<div class="cell" style="left:1010px;top:579px;width:120px;height:25px;border-bottom:none"></div>
<div class="t" style="left:1010px;top:559px;width:112px;text-align:right">589,91</div>
<div class="t" style="left:1010px;top:584px;width:112px;text-align:right">589,91</div>

<div class="hd" style="left:1130px;top:531px;width:17px;height:23px;border-right:none"></div>
<div class="a" style="left:1130px;top:554px;width:17px;height:50px;background:#f0f0f0"></div>
<div class="arr" style="left:1134.5px;top:562px;border-left-width:3.500px;border-right-width:3.500px;border-top:none;border-bottom:4px solid #8a8a8a"></div>
<div class="arr" style="left:1134.5px;top:593px;border-left-width:3.500px;border-right-width:3.500px;border-top:4px solid #8a8a8a"></div>
<svg class="a" style="left:1134px;top:537px" width="10" height="11" viewBox="0 0 10 11"><rect x="0.700" y="0.700" width="8" height="7.300" fill="#fff" stroke="#111" stroke-width="1.300"/><path d="M0.700 3.200h8M4.700 3.200v4.800" stroke="#111" stroke-width="1.200"/><rect x="3" y="8" width="7" height="1.500" fill="#fff"/><path d="M5.200 8.200h5.200l-2.600 2.600z" fill="#111"/></svg>
<div class="t" style="left:800px;top:611px;width:341px;text-align:right;font-size:24.500px;font-weight:bold;line-height:32px;height:32px;color:#000;letter-spacing:-0.3px">Suma: 589,91 PLN</div>
<div class="a" style="left:193px;top:657px;width:960px;height:1px;background:#a0a4aa"></div>
<div class="btn" style="left:904px;top:673px;width:78px;height:22px;border-color:#3c7fb1;box-shadow:inset 0 0 0 1px #7fd0f5"></div>
<div class="btn" style="left:986px;top:673px;width:78px;height:22px"></div>
<div class="btn" style="left:1068px;top:673px;width:78px;height:22px"></div>
<div class="t" style="left:904px;top:677px;width:78px;text-align:center">Zapisz</div>
<div class="t" style="left:986px;top:677px;width:78px;text-align:center">Ok</div>
<div class="t" style="left:1068px;top:677px;width:78px;text-align:center">Anuluj</div>

<!-- CALLOUTS -->
<svg class="a" style="left:0;top:120px;overflow:visible" width="215" height="115" viewBox="0 120 215 115">
 <defs><linearGradient id="cy" x1="0" y1="0" x2="0" y2="1"><stop offset="0" stop-color="#ffe995"/><stop offset="1" stop-color="#fde38a"/></linearGradient>
 <filter id="sh" x="-10%" y="-10%" width="125%" height="130%"><feGaussianBlur in="SourceAlpha" stdDeviation="1.600"/><feOffset dx="0.800" dy="0.800"/><feComponentTransfer><feFuncA type="linear" slope=".4"/></feComponentTransfer><feMerge><feMergeNode/><feMergeNode in="SourceGraphic"/></feMerge></filter></defs>
 <path d="M29.500 159.500 H58.800 L59.200 132 L80 159.500 H183.500 a16 16 0 0 1 16 16 V207 a16 16 0 0 1 -16 16 H29.500 a16 16 0 0 1 -16 -16 V175.500 a16 16 0 0 1 16 -16z" fill="url(#cy)" stroke="#8a8678" stroke-width="1" filter="url(#sh)"/>
</svg>
<div class="call" style="left:13px;top:170px;width:187px">Zamówienie w<br>buforze.</div>
<svg class="a" style="left:900px;top:80px;overflow:visible" width="210" height="110" viewBox="900 80 210 110">
 <path d="M925.200 106.500 H954.700 L946.500 86.400 L976 106.500 H1079.500 a16 16 0 0 1 16 16 V162 a16 16 0 0 1 -16 16 H925.200 a16 16 0 0 1 -16 -16 V122.500 a16 16 0 0 1 16 -16z" fill="url(#cy)" stroke="#8a8678" stroke-width="1" filter="url(#sh)"/>
</svg>
<div class="call" style="left:910px;top:121px;width:186px">Wprowadź jeśli dane<br>są już poprawne.</div>
<div class="a" id="win"></div>
</body>
</html>
